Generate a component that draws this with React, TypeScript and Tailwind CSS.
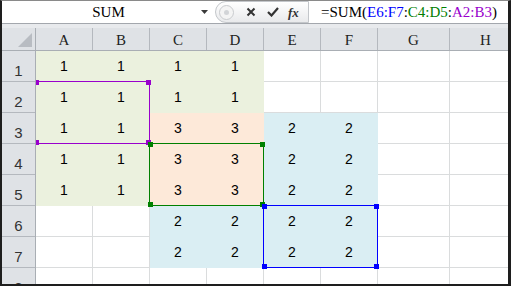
const COLS = ["A", "B", "C", "D", "E", "F", "G", "H"];

type Fill = "g" | "o" | "b" | "w";
type Cell = { v?: string; f: Fill };

const FILL: Record<Fill, string> = {
  g: "bg-[#ebf1de] border-[#ebf1de]",
  o: "bg-[#fde9d9] border-[#fde9d9]",
  b: "bg-[#daeef3] border-[#daeef3]",
  w: "bg-white border-[#dadcdd]",
};

const g1: Cell = { v: "1", f: "g" };
const o3: Cell = { v: "3", f: "o" };
const b2: Cell = { v: "2", f: "b" };
const __: Cell = { f: "w" };

const ROWS: Cell[][] = [
  [g1, g1, g1, g1, __, __, __, __],
  [g1, g1, g1, g1, __, __, __, __],
  [g1, g1, o3, o3, b2, b2, __, __],
  [g1, g1, o3, o3, b2, b2, __, __],
  [g1, g1, o3, o3, b2, b2, __, __],
  [__, __, b2, b2, b2, b2, __, __],
  [__, __, b2, b2, b2, b2, __, __],
  [__, __, __, __, __, __, __, __],
];

function colWidth(i: number) {
  return i >= 6 ? "w-[72px]" : "w-[57px]";
}

function FormulaBar() {
  return (
    <div className="flex h-[23px] border-b border-[#a3a7ad] bg-white">
      <div className="relative flex w-[213px] items-center justify-center [font-family:'Liberation_Serif',serif] text-[15px] text-black">
        SUM
        <svg className="absolute right-[6px] top-[9px]" width="8" height="5" viewBox="0 0 8 5">
          <path d="M0 0 H7 L3.5 4 Z" fill="#3a3a3a" />
        </svg>
      </div>
      <div className="flex w-[94px] items-center rounded-l-full border-y border-l border-r border-[#c3c6ca] bg-gradient-to-b from-white to-[#e9eaec] pl-[3px]">
        <div className="flex h-[15px] w-[15px] items-center justify-center rounded-full border border-[#c9cbce] bg-[#f4f4f4]">
          <div className="h-[5px] w-[5px] rounded-full bg-[#d2d4d7]" />
        </div>
        <svg className="ml-[12px]" width="10" height="10" viewBox="0 0 10 10">
          <path d="M1.5 1.5 L8.5 8.5 M8.5 1.5 L1.5 8.5" stroke="#333" strokeWidth="2" />
        </svg>
        <svg className="ml-[11px]" width="12" height="10" viewBox="0 0 12 10">
          <path d="M1 5 L4.5 8.5 L11 1" stroke="#333" strokeWidth="2.2" fill="none" />
        </svg>
        <span className="ml-[9px] [font-family:'Liberation_Serif',serif] text-[13px] font-bold italic leading-none text-[#333]">
          fx
        </span>
      </div>
      <div className="flex flex-1 items-center whitespace-nowrap pl-[12px] [font-family:'Liberation_Serif',serif] text-[15px] text-black">
        =SUM(<span className="text-[#0000ff]">E6:F7</span>:<span className="text-[#008000]">C4:D5</span>:
        <span className="text-[#9900cc]">A2:B3</span>)
      </div>
    </div>
  );
}

function HeaderRow() {
  return (
    <div className="flex h-[23px] border-b border-[#a9aeb4] bg-[#dfe2e6]">
      <div className="relative w-[34px] shrink-0 border-r border-[#a9aeb4]">
        <svg className="absolute bottom-[3px] right-[3px]" width="14" height="14" viewBox="0 0 14 14">
          <path d="M14 0 V14 H0 Z" fill="#b8bcc2" />
        </svg>
      </div>
      <div className="flex overflow-hidden">
        {COLS.map((c, i) => (
          <div
            key={c}
            className={`${colWidth(i)} flex shrink-0 items-center justify-center border-r border-[#b4b8be] pt-[3px] [font-family:'Liberation_Serif',serif] text-[15px] text-[#222]`}
          >
            {c}
          </div>
        ))}
      </div>
    </div>
  );
}

function Handle({ pos, color }: { pos: string; color: string }) {
  return <div className={`absolute h-[5px] w-[5px] ${pos} ${color}`} />;
}

function RangeBox({ box, line, dot }: { box: string; line: string; dot: string }) {
  return (
    <div className={`absolute h-[63px] w-[115px] border ${box} ${line}`}>
      <Handle pos="-left-[2px] -top-[2px]" color={dot} />
      <Handle pos="left-[110px] -top-[2px]" color={dot} />
      <Handle pos="-left-[2px] top-[58px]" color={dot} />
      <Handle pos="left-[110px] top-[58px]" color={dot} />
    </div>
  );
}

export default function App() {
  return (
    <div className="h-[286px] w-[511px] overflow-hidden border-t border-t-[#8a8a8a] border-b-2 border-l-2 border-r-[3px] border-x-[#1e1e1e] border-b-[#1e1e1e] bg-white [font-family:'Liberation_Sans',sans-serif]">
      <FormulaBar />
      <div className="h-[4px] bg-[#e8eaed]" />
      <HeaderRow />
      <div className="flex">
        <div className="w-[34px] shrink-0 border-r border-[#a9aeb4] bg-[#dfe2e6]">
          {ROWS.map((_, r) => (
            <div
              key={r}
              className="flex h-[31px] items-end justify-center border-b border-[#b4b8be] pb-[3px] text-[15px] leading-none text-[#333]"
            >
              {r + 1}
            </div>
          ))}
        </div>
        <div className="relative flex-1 overflow-hidden">
          {ROWS.map((row, r) => (
            <div key={r} className="flex">
              {row.map((cell, i) => (
                <div
                  key={i}
                  className={`${colWidth(i)} flex h-[31px] shrink-0 items-center justify-center border-r border-b text-[14px] text-black ${FILL[cell.f]}`}
                >
                  {cell.v}
                </div>
              ))}
            </div>
          ))}
          <RangeBox box="-left-px top-[30px]" line="border-[#9900cc]" dot="bg-[#9900cc]" />
          <RangeBox box="left-[113px] top-[92px]" line="border-[#008000]" dot="bg-[#008000]" />
          <RangeBox box="left-[227px] top-[154px]" line="border-[#0000ff]" dot="bg-[#0000ff]" />
        </div>
      </div>
    </div>
  );
}
